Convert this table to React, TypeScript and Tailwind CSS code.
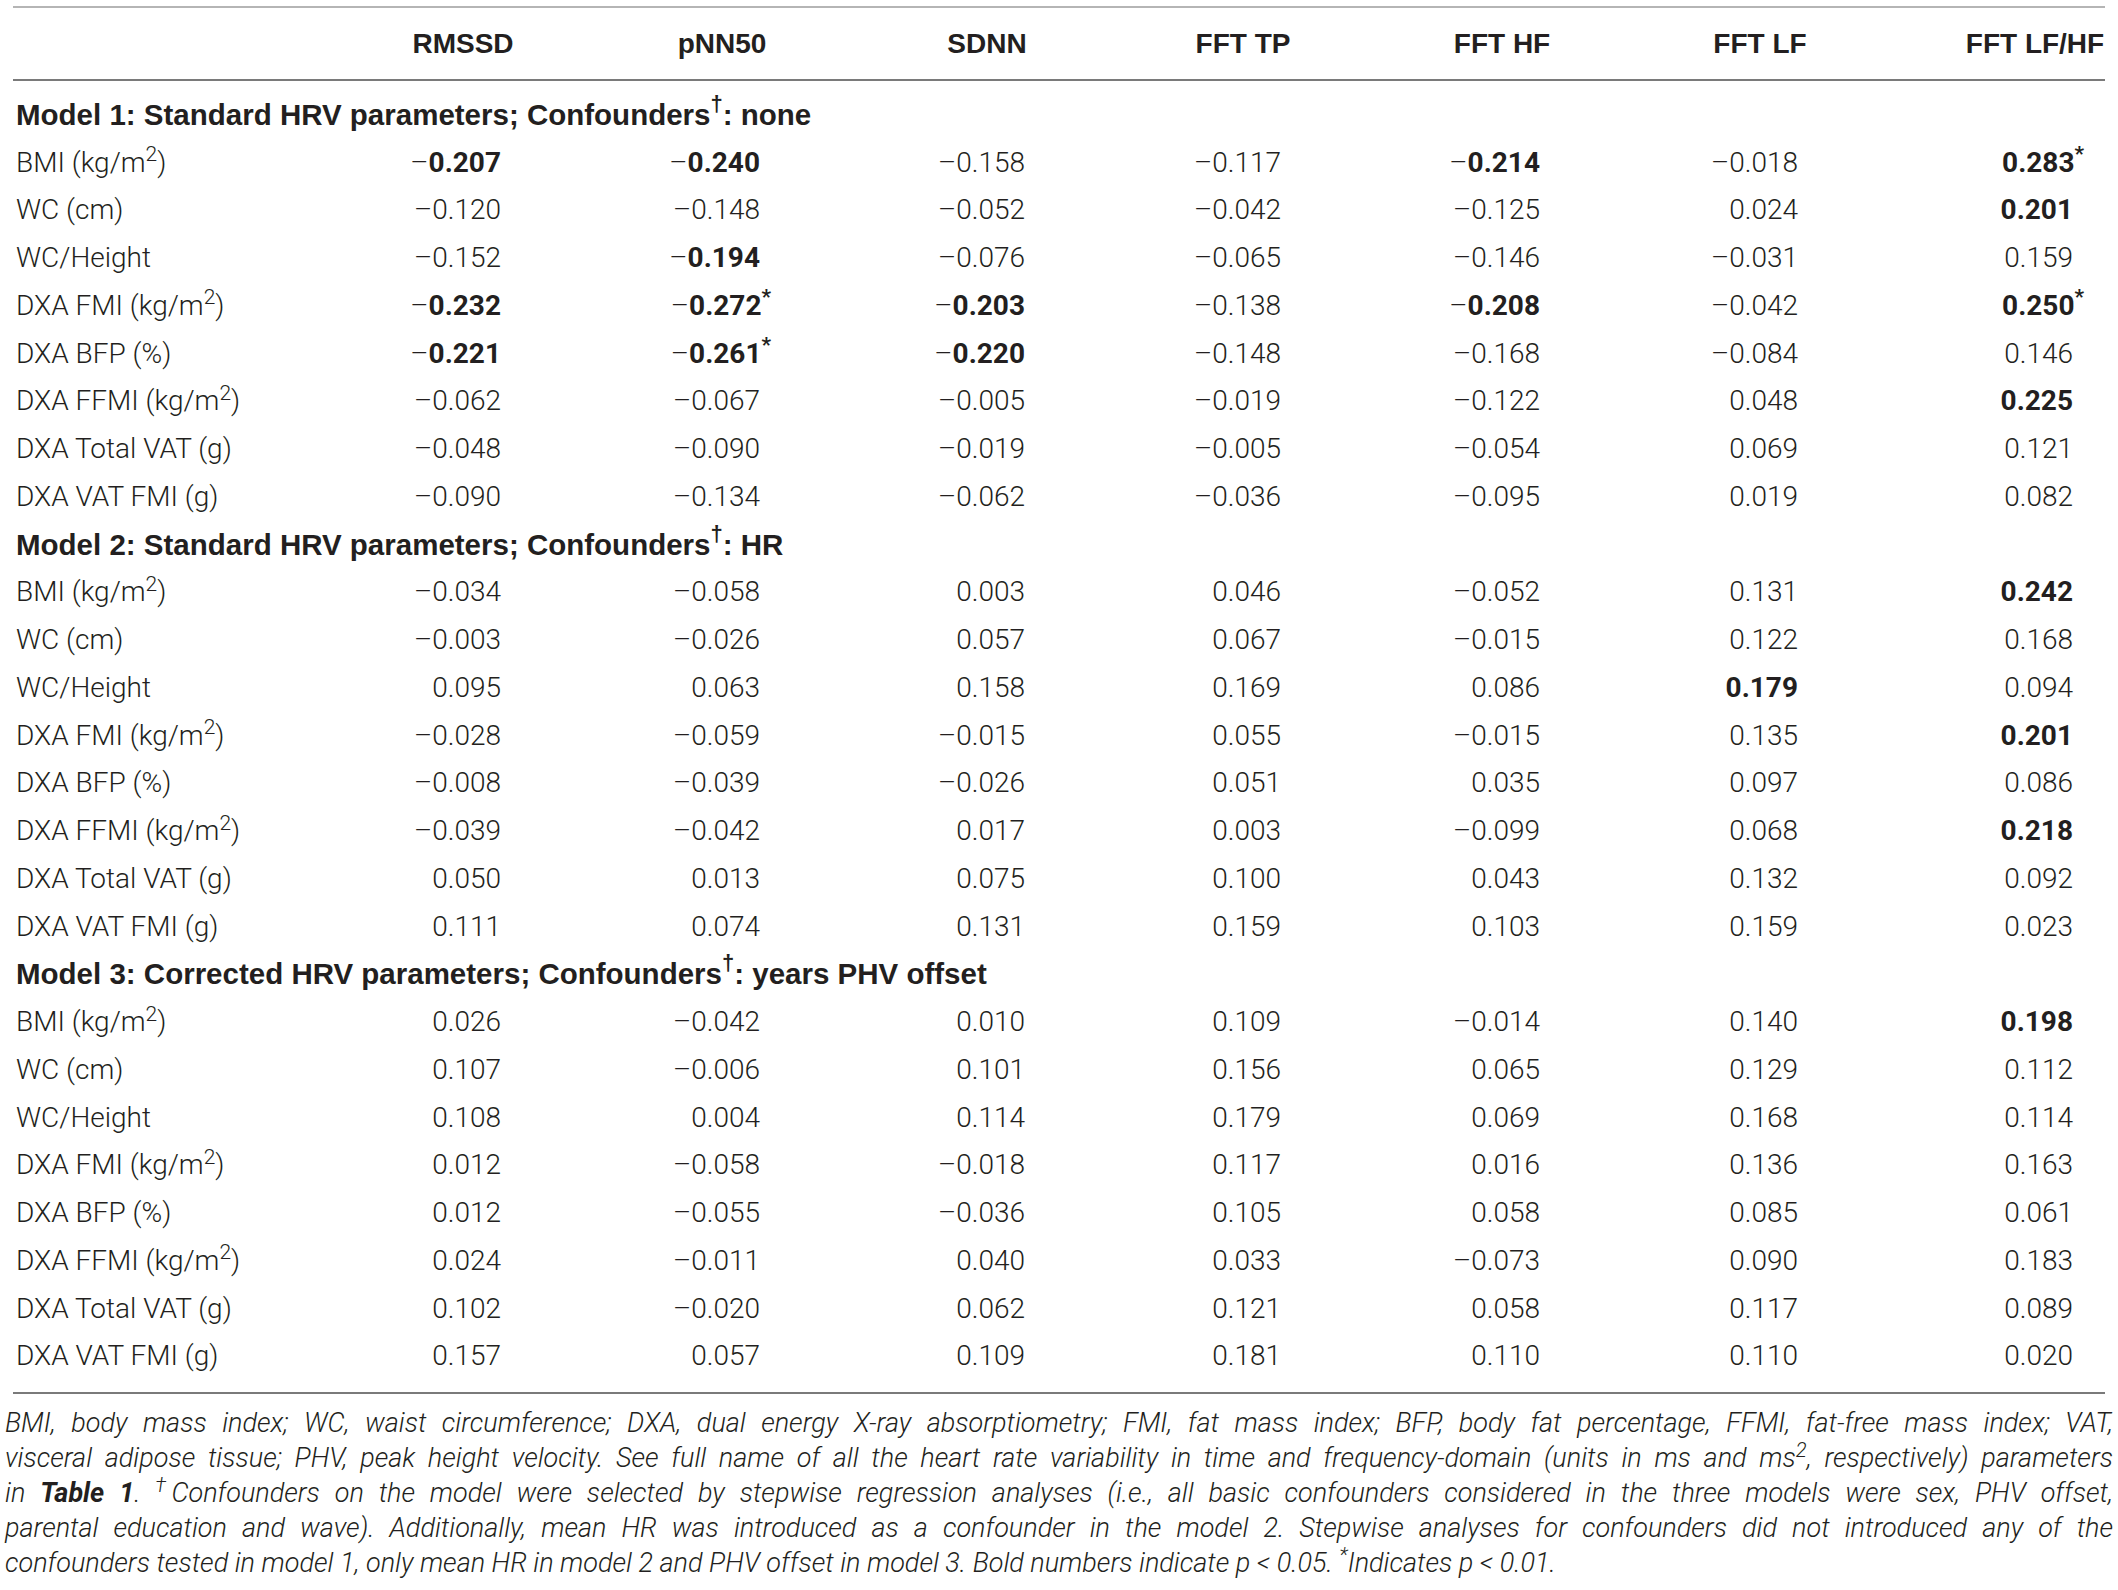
import React from 'react';

type Row = { label: React.ReactNode; values: string[] };
type Section = { title: React.ReactNode; rows: Row[] };

const headers = ['RMSSD', 'pNN50', 'SDNN', 'FFT TP', 'FFT HF', 'FFT LF', 'FFT LF/HF'];

const m2 = (
  <>
    (kg/m<sup>2</sup>)
  </>
);

const labels: React.ReactNode[] = [
  <>BMI {m2}</>,
  'WC (cm)',
  'WC/Height',
  <>DXA FMI {m2}</>,
  'DXA BFP (%)',
  <>DXA FFMI {m2}</>,
  'DXA Total VAT (g)',
  'DXA VAT FMI (g)',
];

// "-" = minus, "!" = bold, trailing "*" = p < 0.01
const data: string[][][] = [
  [
    ['-!0.207', '-!0.240', '-0.158', '-0.117', '-!0.214', '-0.018', '!0.283*'],
    ['-0.120', '-0.148', '-0.052', '-0.042', '-0.125', '0.024', '!0.201'],
    ['-0.152', '-!0.194', '-0.076', '-0.065', '-0.146', '-0.031', '0.159'],
    ['-!0.232', '-!0.272*', '-!0.203', '-0.138', '-!0.208', '-0.042', '!0.250*'],
    ['-!0.221', '-!0.261*', '-!0.220', '-0.148', '-0.168', '-0.084', '0.146'],
    ['-0.062', '-0.067', '-0.005', '-0.019', '-0.122', '0.048', '!0.225'],
    ['-0.048', '-0.090', '-0.019', '-0.005', '-0.054', '0.069', '0.121'],
    ['-0.090', '-0.134', '-0.062', '-0.036', '-0.095', '0.019', '0.082'],
  ],
  [
    ['-0.034', '-0.058', '0.003', '0.046', '-0.052', '0.131', '!0.242'],
    ['-0.003', '-0.026', '0.057', '0.067', '-0.015', '0.122', '0.168'],
    ['0.095', '0.063', '0.158', '0.169', '0.086', '!0.179', '0.094'],
    ['-0.028', '-0.059', '-0.015', '0.055', '-0.015', '0.135', '!0.201'],
    ['-0.008', '-0.039', '-0.026', '0.051', '0.035', '0.097', '0.086'],
    ['-0.039', '-0.042', '0.017', '0.003', '-0.099', '0.068', '!0.218'],
    ['0.050', '0.013', '0.075', '0.100', '0.043', '0.132', '0.092'],
    ['0.111', '0.074', '0.131', '0.159', '0.103', '0.159', '0.023'],
  ],
  [
    ['0.026', '-0.042', '0.010', '0.109', '-0.014', '0.140', '!0.198'],
    ['0.107', '-0.006', '0.101', '0.156', '0.065', '0.129', '0.112'],
    ['0.108', '0.004', '0.114', '0.179', '0.069', '0.168', '0.114'],
    ['0.012', '-0.058', '-0.018', '0.117', '0.016', '0.136', '0.163'],
    ['0.012', '-0.055', '-0.036', '0.105', '0.058', '0.085', '0.061'],
    ['0.024', '-0.011', '0.040', '0.033', '-0.073', '0.090', '0.183'],
    ['0.102', '-0.020', '0.062', '0.121', '0.058', '0.117', '0.089'],
    ['0.157', '0.057', '0.109', '0.181', '0.110', '0.110', '0.020'],
  ],
];

const titles: React.ReactNode[] = [
  <>Model 1: Standard HRV parameters; Confounders<sup>†</sup>: none</>,
  <>Model 2: Standard HRV parameters; Confounders<sup>†</sup>: HR</>,
  <>Model 3: Corrected HRV parameters; Confounders<sup>†</sup>: years PHV offset</>,
];

const sections: Section[] = titles.map((title, i) => ({
  title,
  rows: data[i].map((values, j) => ({ label: labels[j], values })),
}));

const gridCols = 'grid grid-cols-[380px_105px_259px_265px_256px_259px_258px_275px]';
const boldFont = "font-['Liberation_Sans',Arial,sans-serif] font-bold";

function Value({ raw }: { raw: string }) {
  const neg = raw.startsWith('-');
  const bold = raw.includes('!');
  const star = raw.endsWith('*');
  const num = raw.replace(/[-!*]/g, '');
  return (
    <div className="flex justify-end">
      <span className="whitespace-nowrap text-right">
        {neg && <span className="font-light">–</span>}
        <span className={bold ? 'font-bold' : 'font-light'}>{num}</span>
        {star && <sup className="mr-[-11px] font-bold">*</sup>}
      </span>
    </div>
  );
}

function Header({ text }: { text: string }) {
  return (
    <div className="flex justify-end">
      <div className={`flex w-[76px] justify-center whitespace-nowrap ${boldFont}`}>{text}</div>
    </div>
  );
}

export default function App() {
  return (
    <div
      className="w-[2118px] bg-white text-[#231f20]"
      style={{ fontFamily: 'Roboto, "Liberation Sans", sans-serif' }}
    >
      <div className="mx-[13px] mt-[6px] border-t-2 border-[#b5b5b5]" />
      <div className={`${gridCols} h-[71px] items-center pl-[16px] text-[28px]`}>
        <div />
        {headers.map((h) => (
          <Header key={h} text={h} />
        ))}
      </div>
      <div className="mx-[13px] border-t-2 border-[#7a7a7a]" />

      <div className="pt-[10px] pb-[12px] text-[28px]">
        {sections.map((s, i) => (
          <div key={i}>
            <div
              className={`flex h-[47.75px] items-center whitespace-nowrap pl-[16px] text-[29.5px] ${boldFont}`}
            >
              {s.title}
            </div>
            {s.rows.map((r, j) => (
              <div key={j} className={`${gridCols} h-[47.75px] items-center pl-[16px]`}>
                <div className="whitespace-nowrap font-light">{r.label}</div>
                {r.values.map((v, k) => (
                  <Value key={k} raw={v} />
                ))}
              </div>
            ))}
          </div>
        ))}
      </div>
      <div className="mx-[13px] border-t-2 border-[#7a7a7a]" />

      <div className="px-[5px] pt-[12px] text-[27px] font-light italic leading-[35px]">
        <p className="text-justify [text-align-last:justify]">
          BMI, body mass index; WC, waist circumference; DXA, dual energy X-ray absorptiometry; FMI, fat mass index;
          BFP, body fat percentage, FFMI, fat-free mass index; VAT,
        </p>
        <p className="text-justify [text-align-last:justify]">
          visceral adipose tissue; PHV, peak height velocity. See full name of all the heart rate variability in time and
          frequency-domain (units in ms and ms<sup>2</sup>, respectively) parameters
        </p>
        <p className="text-justify [text-align-last:justify]">
          in <span className="font-bold">Table 1</span>. <sup className="mr-[-3px]">†</sup>Confounders on the model were
          selected by stepwise regression analyses (i.e., all basic confounders considered in the three models were sex,
          PHV offset,
        </p>
        <p className="text-justify [text-align-last:justify]">
          parental education and wave). Additionally, mean HR was introduced as a confounder in the model 2. Stepwise
          analyses for confounders did not introduced any of the
        </p>
        <p>
          confounders tested in model 1, only mean HR in model 2 and PHV offset in model 3. Bold numbers indicate p &lt;
          0.05. <sup>*</sup>Indicates p &lt; 0.01.
        </p>
      </div>
    </div>
  );
}
